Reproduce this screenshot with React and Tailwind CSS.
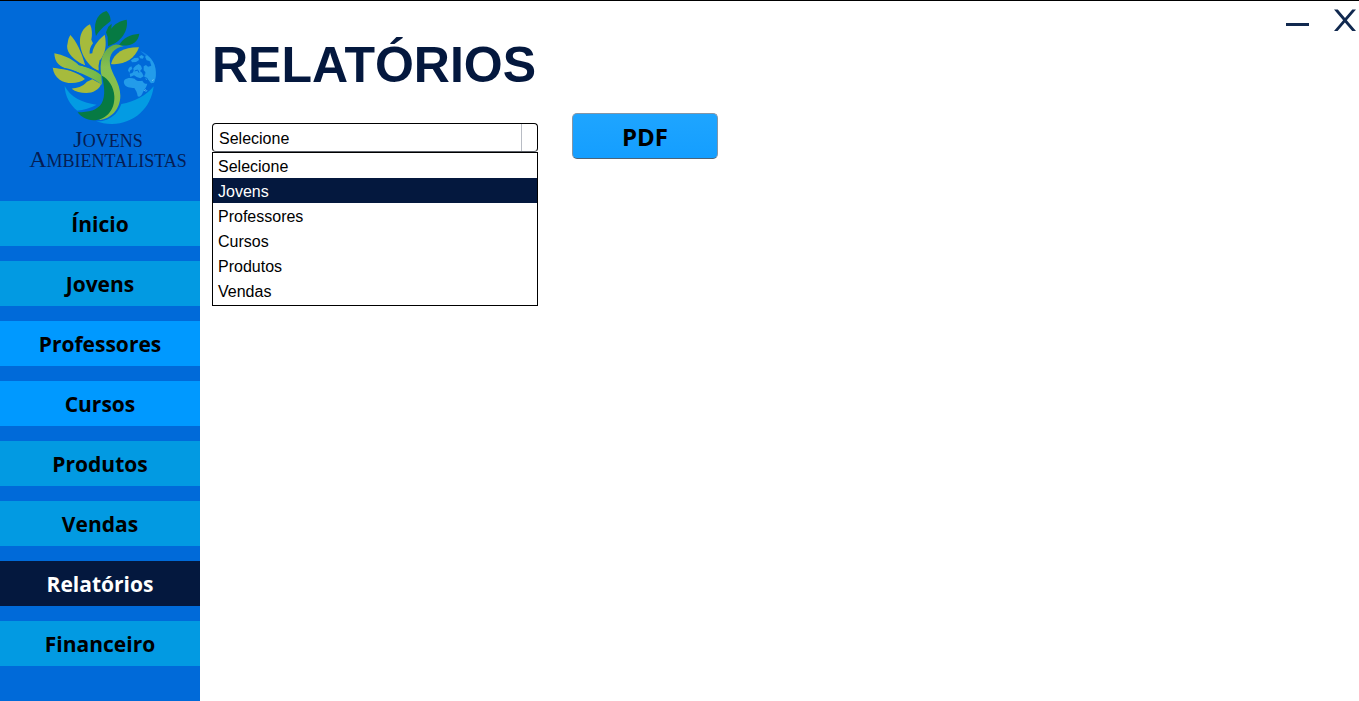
import { useState } from "react";

const navItems = [
  { label: "Ínicio", tone: "bg-[#029ae2] text-black" },
  { label: "Jovens", tone: "bg-[#029ae2] text-black" },
  { label: "Professores", tone: "bg-[#0099ff] text-black" },
  { label: "Cursos", tone: "bg-[#0099ff] text-black" },
  { label: "Produtos", tone: "bg-[#029ae2] text-black" },
  { label: "Vendas", tone: "bg-[#029ae2] text-black" },
  { label: "Relatórios", tone: "bg-[#04183e] text-white" },
  { label: "Financeiro", tone: "bg-[#029ae2] text-black" },
];

const reports = ["Selecione", "Jovens", "Professores", "Cursos", "Produtos", "Vendas"];

function TreeGlobe() {
  return (
    <svg viewBox="150 24 330 354" className="h-[118px] w-[110px]" aria-hidden="true">
      <defs>
        <linearGradient id="stem" x1="0" y1="0" x2="1" y2="0">
          <stop offset="0" stopColor="#a6bb3c" />
          <stop offset="0.6" stopColor="#84bd4e" />
          <stop offset="1" stopColor="#6fb748" />
        </linearGradient>
        <linearGradient id="trunk" x1="0" y1="0" x2="0" y2="1">
          <stop offset="0" stopColor="#62aa48" />
          <stop offset="0.3" stopColor="#86bf50" />
          <stop offset="1" stopColor="#83bd45" />
        </linearGradient>
      </defs>
      {/* globe */}
      <path d="M421 153C447 162 465 185 467 212C468 228 466 238 462 248L446 241L433 229L438 200L454 197L445 175Z" fill="#1284e6" />
      <g fill="#239cea">
        <path d="M374 239C382 232 395 233 404 236C408 243 417 244 427 242C431 250 437 252 442 251C440 261 433 268 429 276C426 286 420 293 413 289C412 278 407 270 403 264C391 263 377 263 373 252C371 247 371 243 374 239Z" />
        <path d="M393 181L403 174L415 173L417 180L408 186L396 187Z" />
        <path d="M418 169L425 165L432 170L428 176L420 175Z" />
        <path d="M387 203L394 199L397 207L391 211L388 218L384 211Z" />
        <path d="M389 221L397 219L401 213L400 205L407 197L416 192L423 197L426 206L420 213L426 218L431 229L421 235L410 231L402 226L391 231Z" />
        <path d="M431 199L438 195L445 202L454 197L451 184L440 181L435 170L441 166C455 177 464 190 466 204C469 222 468 235 462 248L453 250L446 241L438 239L433 229L438 218L431 211Z" />
        <path d="M434 274L440 269L443 272L438 276Z" />
      </g>
      <g fill="none" stroke="#006ad9" strokeWidth="3">
        <path d="M404 213L413 210L417 218" />
        <path d="M429 232L440 234L445 242" />
      </g>
      <path d="M456 242L461 239M433 272L437 269" stroke="#77c4f4" strokeWidth="3" />
      <g fill="#039be3">
        <path d="M194 258C211 290 245 309 290 314C272 324 250 330 232 332C210 315 195 288 194 258Z" />
        <path d="M461 259C454 325 400 373 334 372C318 372 302 369 289 364C315 364 331 356 347 341C355 331 361 321 364 312C405 305 437 288 461 259Z" />
      </g>
      {/* dark leaves */}
      <g fill="#067a43">
        <path d="M319 33C325 38 332 48 332 63C318 75 302 85 288 108C280 77 287 42 319 33Z" />
        <path d="M380 59C386 90 365 127 324 138L323 111L318 97L325 80L335 71L334 86C344 71 359 63 380 59Z" />
        <path d="M418 101C414 128 393 140 357 136C369 113 391 103 418 101Z" />
      </g>
      {/* light leaves */}
      <g fill="#a6bb3c">
        <path d="M270 73C277 88 277 105 274 119L279 130C271 140 268 150 269 161L277 160C278 146 287 126 314 104C321 136 316 158 301 180L296 212C281 207 271 196 264 188C239 160 223 96 270 73Z" />
        <path d="M211 105C229 124 243 151 256 197L239 188C216 174 195 153 203 129C204 119 207 112 211 105Z" />
        <path d="M417 142C405 177 372 196 333 192C342 157 374 141 417 142Z" />
        <path d="M158 202C178 206 225 205 256 236C234 254 198 252 179 239C167 230 160 219 158 202Z" />
        <path d="M215 266C231 262 247 262 261 245L277 238L303 252C299 269 278 279 259 279C242 279 226 275 215 266Z" />
      </g>
      <path d="M163 160C188 165 215 175 237 196C262 202 285 207 304 226L306 254C278 233 243 217 207 209C180 202 164 188 163 160Z" fill="url(#stem)" />
      <path d="M303 221C297 184 311 141 345 134C352 132 360 136 371 139C342 144 326 163 330 192C334 222 361 247 361 287C361 326 334 357 297 360C321 340 340 315 335 277C331 250 310 240 303 221Z" fill="url(#trunk)" />
      <path d="M306 227C324 235 342 260 343 289C345 331 318 361 280 361C260 360 241 350 233 337C267 337 292 331 305 310C318 285 312 256 306 227Z" fill="#067a43" />
      {/* gaps between the leaves and the stem */}
      <g fill="none" stroke="#006ad9" strokeWidth="5" strokeLinecap="round">
        <path d="M160 201C195 205 232 211 260 238" />
        <path d="M237 192C262 200 285 206 301 220" />
        <path d="M301 182C297 195 297 204 299 214" />
      </g>
    </svg>
  );
}

function Sidebar() {
  return (
    <aside className="flex w-[200px] shrink-0 flex-col bg-[#006ad9]">
      <div className="flex h-[200px] flex-col items-center pt-[7px] pl-2.5">
        <TreeGlobe />
        <p className="mt-1 pl-1.5 text-center font-['Liberation_Serif',serif] text-[18px] leading-[18px] whitespace-nowrap text-[#051d54]">
          <span className="block">
            <span className="text-[24px] leading-[18px]">J</span>OVENS
          </span>
          <span className="block">
            <span className="text-[24px] leading-[18px]">A</span>MBIENTALISTAS
          </span>
        </p>
      </div>
      <nav className="flex flex-col gap-[15px] pb-[35px]">
        {navItems.map((item) => (
          <button
            key={item.label}
            type="button"
            className={`h-[45px] w-full font-['Open_Sans',sans-serif] text-[21px] leading-[30px] font-bold ${item.tone}`}
          >
            {item.label}
          </button>
        ))}
      </nav>
    </aside>
  );
}

function ReportPicker() {
  const [report, setReport] = useState("Selecione");
  return (
    <div className="relative mb-[7px] w-[326px] font-['Liberation_Sans',sans-serif] text-[16px] text-black">
      <div className="flex h-[29px] rounded-[4px] border border-black border-b-[#5b6068] bg-white">
        <select
          aria-label="Relatório"
          value={report}
          onChange={(e) => setReport(e.target.value)}
          className="min-w-0 flex-1 appearance-none bg-transparent pt-[3px] pl-1.5 outline-none"
        >
          {reports.map((name) => (
            <option key={name}>{name}</option>
          ))}
        </select>
        <span className="w-4 border-l border-[#b8bcc4]" />
      </div>
      <ul role="listbox" aria-label="Opções de relatório" className="absolute top-full left-0 w-full border border-black bg-white pb-0.5">
        {reports.map((name) => (
          <li
            key={name}
            role="option"
            aria-selected={name === "Jovens"}
            onClick={() => setReport(name)}
            className="h-[25px] pl-[5px] leading-[28px] aria-selected:bg-[#04183e] aria-selected:text-white"
          >
            {name}
          </li>
        ))}
      </ul>
    </div>
  );
}

export default function App() {
  return (
    <div className="flex min-h-screen border-t border-black bg-white">
      <Sidebar />
      <main className="min-w-0 flex-1 pl-3">
        <header className="flex items-start justify-between">
          <h1 className="pt-8 font-['Liberation_Sans',sans-serif] text-[50px] leading-[64px] font-bold text-[#04183e]">
            RELATÓRIOS
          </h1>
          <div className="flex gap-6 pt-2 pr-px">
            <button type="button" aria-label="Minimizar" className="flex h-6 w-6 items-center justify-center">
              <svg viewBox="0 0 24 24" className="h-6 w-6" aria-hidden="true">
                <path d="M0 14h23v3H0z" fill="#11294f" />
              </svg>
            </button>
            <button type="button" aria-label="Fechar" className="flex h-6 w-6 items-center justify-center">
              <svg viewBox="0 0 24 24" className="h-6 w-6" aria-hidden="true">
                <path d="M0 0.5h3.8l7.2 8.5L18.3 0.5h3.7L12.8 11.3 22 22h-3.8l-7.3-8.6L3.6 22H0l9.1-10.8z" fill="#11294f" />
              </svg>
            </button>
          </div>
        </header>
        <div className="flex items-end gap-[34px] pt-4">
          <ReportPicker />
          <button
            type="button"
            className="h-[46px] w-[146px] rounded-[5px] border border-[#8396a8] border-b-[#4d6478] bg-linear-to-b from-[#1ea5ff] to-[#149eff] pt-0.5 font-['Open_Sans',sans-serif] text-[24px] leading-[30px] font-bold text-black"
          >
            PDF
          </button>
        </div>
      </main>
    </div>
  );
}
